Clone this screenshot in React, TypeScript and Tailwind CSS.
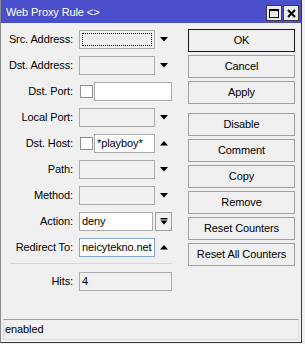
import React from "react";

const font = { fontFamily: '"Liberation Sans", Arial, sans-serif' };

function Down() {
  return (
    <svg width="8" height="5" viewBox="0 0 8 5" className="block">
      <polygon points="0,0 8,0 4,4.5" fill="#000" />
    </svg>
  );
}

function Up() {
  return (
    <svg width="8" height="5" viewBox="0 0 8 5" className="block">
      <polygon points="0,4.5 8,4.5 4,0" fill="#000" />
    </svg>
  );
}

function Row({ label, children }: { label: string; children: React.ReactNode }) {
  return (
    <div className="flex h-[19px] items-center">
      <span className="w-[72px] whitespace-nowrap text-right leading-[13px]">{label}</span>
      <div className="ml-[6px] flex h-full items-center">{children}</div>
    </div>
  );
}

function Field({
  w,
  white,
  focus,
  blue,
  text,
}: {
  w: string;
  white?: boolean;
  focus?: boolean;
  blue?: boolean;
  text?: string;
}) {
  return (
    <div
      className={`${w} relative h-full border ${blue ? "border-[#8aa6d6]" : "border-[#ababab]"} ${
        white ? "bg-white" : "bg-[#f0f0f0]"
      } flex items-center overflow-hidden whitespace-nowrap pl-[2px] leading-[13px]`}
    >
      {focus && (
        <div className="absolute inset-[2px] border border-dotted border-black" />
      )}
      {text}
    </div>
  );
}

function Check() {
  return <div className="ml-[1px] h-[13px] w-[13px] border border-[#8f8f8f] bg-white" />;
}

function Btn({ label, primary, className = "" }: { label: string; primary?: boolean; className?: string }) {
  return (
    <div
      className={`flex h-[23px] w-[107px] items-center justify-center whitespace-nowrap border leading-[13px] ${
        primary ? "border-[#1a1a1a]" : "border-[#a0a0a0]"
      } bg-[#f0f0f0] ${className}`}
    >
      {label}
    </div>
  );
}

export default function App() {
  return (
    <div className="h-[344px] w-[305px] bg-[#f0f0f0] text-[11px] tracking-[-0.1px] text-black" style={font}>
      <div className="flex h-[343px] w-[302px] flex-col border-b border-l border-r border-b-[#3a3a3a] border-l-[#8a8a8a] border-r-[#3a3a3a]">
        {/* title bar */}
        <div className="flex h-[23px] shrink-0 items-start bg-[#4b4fcb] pl-[5px] pr-[2px]">
          <span className="pt-[6px] leading-[13px] text-white">Web Proxy Rule &lt;&gt;</span>
          <div className="ml-auto mt-[5px] flex gap-[1px]">
            <div className="flex h-[16px] w-[16px] items-center justify-center border border-[#3c3c3c] bg-[#e8e8e8]">
              <div className="h-[9px] w-[10px] border border-t-2 border-black" />
            </div>
            <div className="flex h-[16px] w-[16px] items-center justify-center border border-[#3c3c3c] bg-[#e8e8e8]">
              <svg width="9" height="9" viewBox="0 0 9 9">
                <path d="M1 1 L8 8 M8 1 L1 8" stroke="#000" strokeWidth="2" />
              </svg>
            </div>
          </div>
        </div>

        <div className="flex flex-1">
          {/* fields */}
          <div className="flex w-[187px] flex-col pt-[7px]">
            <div className="flex flex-col gap-[7px]">
              <Row label="Src. Address:">
                <Field w="w-[76px]" focus />
                <div className="ml-[5px]"><Down /></div>
              </Row>
              <Row label="Dst. Address:">
                <Field w="w-[76px]" />
                <div className="ml-[5px]"><Down /></div>
              </Row>
              <Row label="Dst. Port:">
                <Check />
                <div className="ml-[1px] h-full"><Field w="w-[78px]" white /></div>
              </Row>
              <Row label="Local Port:">
                <Field w="w-[76px]" />
                <div className="ml-[5px]"><Down /></div>
              </Row>
              <Row label="Dst. Host:">
                <Check />
                <div className="ml-[1px] h-full"><Field w="w-[61px]" white text="*playboy*" /></div>
                <div className="ml-[5px]"><Up /></div>
              </Row>
              <Row label="Path:">
                <Field w="w-[76px]" />
                <div className="ml-[5px]"><Down /></div>
              </Row>
              <Row label="Method:">
                <Field w="w-[76px]" />
                <div className="ml-[5px]"><Down /></div>
              </Row>
              <Row label="Action:">
                <Field w="w-[74px]" white text="deny" />
                <div className="ml-[2px] flex h-full w-[17px] flex-col items-center justify-center border border-[#a0a0a0] bg-[#f0f0f0]">
                  <svg width="8" height="7" viewBox="0 0 8 7" className="block">
                    <rect x="0.5" y="0" width="7" height="1.5" fill="#000" />
                    <polygon points="0.5,2.5 7.5,2.5 4,6.5" fill="#000" />
                  </svg>
                </div>
              </Row>
              <Row label="Redirect To:">
                <Field w="w-[76px]" white blue text="neicytekno.net" />
                <div className="ml-[5px]"><Up /></div>
              </Row>
            </div>
            <div className="ml-[9px] mt-[6px] h-0 w-[162px] border-t border-[#d6d6d6]" />
            <div className="mt-[8px]">
              <Row label="Hits:">
                <Field w="w-[93px]" text="4" />
              </Row>
            </div>
          </div>

          {/* buttons */}
          <div className="flex flex-col gap-[3px] pt-[6px]">
            <Btn label="OK" primary />
            <Btn label="Cancel" />
            <Btn label="Apply" />
            <Btn label="Disable" className="mt-[6px]" />
            <Btn label="Comment" />
            <Btn label="Copy" />
            <Btn label="Remove" />
            <Btn label="Reset Counters" />
            <Btn label="Reset All Counters" />
          </div>
        </div>

        {/* status bar */}
        <div className="mx-[2px] mb-[2px] flex h-[21px] shrink-0 items-center border border-[#dcdcdc] border-t-[#a0a0a0] pl-[1px] leading-[13px]">
          enabled
        </div>
      </div>
    </div>
  );
}
